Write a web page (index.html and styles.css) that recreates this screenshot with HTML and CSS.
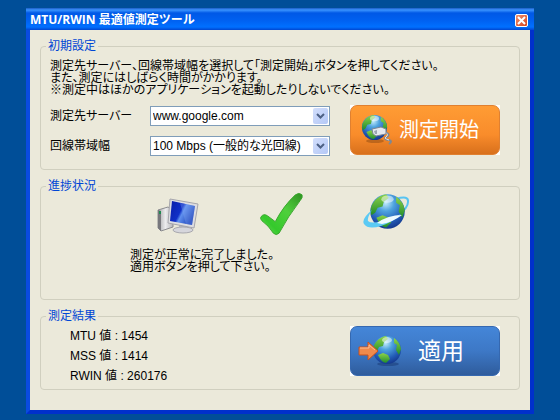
FILE: index.html
```html
<!DOCTYPE html>
<html lang="ja">
<head>
  <meta charset="UTF-8" />
  <meta name="viewport" content="width=device-width, initial-scale=1.0"/>
  <title>MTU/RWIN 最適値測定ツール</title>
  <link rel="stylesheet" href="styles.css">
</head>
<body>
  <svg class="defs" width="0" height="0">
    <defs>
      <radialGradient id="sea" cx="0.45" cy="0.25" r="0.8">
        <stop offset="0" stop-color="#c4ecfb"/>
        <stop offset="0.3" stop-color="#4ea3df"/>
        <stop offset="0.7" stop-color="#2159b4"/>
        <stop offset="1" stop-color="#123184"/>
      </radialGradient>
      <linearGradient id="land" x1="0" y1="0" x2="0" y2="1">
        <stop offset="0" stop-color="#8ed448"/>
        <stop offset="1" stop-color="#1f8a2c"/>
      </linearGradient>
      <linearGradient id="screen" x1="0" y1="0" x2="1" y2="0.5">
        <stop offset="0" stop-color="#0a1ea8"/>
        <stop offset="0.5" stop-color="#1030c8"/>
        <stop offset="0.6" stop-color="#5f90ee"/>
        <stop offset="1" stop-color="#1a3fb8"/>
      </linearGradient>
      <linearGradient id="metal" x1="0" y1="0" x2="1" y2="0">
        <stop offset="0" stop-color="#a8a8aa"/>
        <stop offset="0.5" stop-color="#ececee"/>
        <stop offset="1" stop-color="#b4b4b8"/>
      </linearGradient>
      <linearGradient id="tick" x1="1" y1="0" x2="0" y2="1">
        <stop offset="0" stop-color="#2f8f22"/>
        <stop offset="0.4" stop-color="#4fd03c"/>
        <stop offset="0.75" stop-color="#35c92c"/>
        <stop offset="1" stop-color="#6fe05a"/>
      </linearGradient>
      <symbol id="globe" viewBox="0 0 30 30">
        <circle cx="15" cy="15" r="14" fill="url(#sea)"/>
        <path d="M4 7 Q8 2 14 1 L16 4 L12 7 L11 11 L7 12 L5 16 L2 18 Q0 12 4 7Z" fill="url(#land)"/>
        <path d="M22 3 Q28 7 29 14 L27 20 L24 15 L25 10 L22 8Z" fill="url(#land)"/>
        <path d="M6 20 L11 18 L16 20 L18 24 L14 28 Q9 27 6 20Z" fill="url(#land)"/>
        <ellipse cx="15" cy="5" rx="5" ry="3" fill="#fff" opacity="0.5"/>
      </symbol>
    </defs>
  </svg>

  <div class="window">
    <div class="titlebar">
      <h1>MTU/RWIN 最適値測定ツール</h1>
      <button type="button" class="close" aria-label="閉じる">
        <svg width="9" height="9" viewBox="0 0 9 9"><path d="M1 1 L8 8 M8 1 L1 8" stroke="#fff" stroke-width="2"/></svg>
      </button>
    </div>

    <form class="content">
      <fieldset class="settings">
        <legend>初期設定</legend>
        <div class="inner">
          <p class="note">測定先サーバー、回線帯域幅を選択して「測定開始」ボタンを押してください。<br>
            また、測定にはしばらく時間がかかります。<br>
            ※測定中はほかのアプリケーションを起動したりしないでください。</p>
          <div class="row">
            <div class="fields">
              <label for="server">測定先サーバー</label>
              <div class="combo">
                <select id="server"><option>www.google.com</option></select>
                <svg viewBox="0 0 15 16"><path d="M4 6 L7.500 9.500 L11 6" fill="none" stroke="#4d6185" stroke-width="2"/></svg>
              </div>
              <label for="band">回線帯域幅</label>
              <div class="combo">
                <select id="band"><option>100 Mbps (一般的な光回線)</option></select>
                <svg viewBox="0 0 15 16"><path d="M4 6 L7.500 9.500 L11 6" fill="none" stroke="#4d6185" stroke-width="2"/></svg>
              </div>
            </div>
            <button type="button" class="big">
              <span class="face start">
                <svg width="32" height="32" viewBox="0 0 32 32">
                  <ellipse cx="14" cy="27" rx="9" ry="2" fill="#8d4a12" opacity="0.5"/>
                  <use href="#globe" x="0" y="0" width="27" height="27"/>
                  <path d="M22 18 Q29 19 27 22 L24 24 Q24 26 28 26 Q32 27 28 30" fill="none" stroke="#7d8894" stroke-width="2"/>
                  <path d="M22 18 Q28 19 26 22 L24 24 Q25 25 28 26" fill="none" stroke="#dfe5ea"/>
                  <path d="M11 15 L20 13 L25 15 L25 20 L15 22 L12 20Z" fill="#e4e8ee" stroke="#7b8592"/>
                  <path d="M13 17 L16 16 L16 20 L14 20Z" fill="#9aa5b2"/>
                </svg>
                測定開始
              </span>
            </button>
          </div>
        </div>
      </fieldset>

      <fieldset class="progress">
        <legend>進捗状況</legend>
        <div class="steps">
          <svg width="42" height="40" viewBox="0 -4 42 40">
            <path d="M1 12 L11 9 L16 12 L16 29 L4 33 L1 30Z" fill="url(#metal)" stroke="#8c8c90"/>
            <path d="M1 12 L4 13 L4 33 L1 30Z" fill="#77777c"/>
            <path d="M2 13 H4 V16 H2Z" fill="#1f8a50"/>
            <path d="M22 26 L31 27 L31 31 L22 31Z" fill="#bcbcc2"/>
            <ellipse cx="26" cy="32" rx="10" ry="3" fill="#d6d6dc" stroke="#a8a8ae"/>
            <path d="M13 1 L41 6 L37 30 L11 25Z" fill="#dddde1" stroke="#a6a6ac"/>
            <path d="M15 3 L38 8 L35 27 L13 23Z" fill="url(#screen)"/>
            <path d="M23 5 L38 8 L35 27 L29 26Z" fill="#8bb1f6" opacity="0.3"/>
          </svg>
          <svg width="44" height="44" viewBox="0 0 46 46">
            <path d="M2 26 Q5 22 9 25 L17 31 Q26 14 38 3 Q42 0 45 3 Q46 6 43 9 Q30 26 21 43 Q18 46 15 43 Q10 35 3 30 Q1 28 2 26Z" fill="url(#tick)" stroke="#37a52b"/>
          </svg>
          <svg width="48" height="40" viewBox="0 0 48 40">
            <path d="M33 5 Q46 1 45 8 Q45 14 35 21" fill="none" stroke="#58c4f2" stroke-width="2"/>
            <use href="#globe" x="6" y="-1" width="37" height="37"/>
            <path d="M9 16 Q-2 25 1 30 Q5 36 18 32 Q30 28 38 20 Q29 24 19 27 Q8 30 5 27 Q4 24 9 16Z" fill="#5bcaf4"/>
            <path d="M14 29 Q25 21 39 21 Q30 28 19 30Z" fill="#eefaff"/>
          </svg>
        </div>
        <p class="message">測定が正常に完了しました。<br>適用ボタンを押して下さい。</p>
      </fieldset>

      <fieldset class="result">
        <legend>測定結果</legend>
        <div class="inner row">
          <div class="values">
            <p>MTU 値 : 1454</p>
            <p>MSS 値 : 1414</p>
            <p>RWIN 値 : 260176</p>
          </div>
          <button type="button" class="big">
            <span class="face apply">
              <svg width="44" height="32" viewBox="0 0 44 32">
                <ellipse cx="30" cy="29" rx="11" ry="2" fill="#1d3f7c" opacity="0.6"/>
                <use href="#globe" x="14" y="0" width="30" height="30"/>
                <path d="M1 12 H10 V7 L20 16 L10 25 V20 H1Z" fill="#f08a4c" stroke="#c9511c"/>
                <path d="M2 13 H11 V10 L17 15" fill="none" stroke="#fbbd92"/>
              </svg>
              適用
            </span>
          </button>
        </div>
      </fieldset>
    </form>
  </div>
</body>
</html>
```

FILE: styles.css
```css
* {
  margin: 0;
  padding: 0;
  box-sizing: border-box;
}

body {
  background: #004e98;
  padding: 8px 26px 6px;
  font-family: "Liberation Sans", "Noto Sans CJK JP", sans-serif;
  font-size: 12px;
  line-height: 12px;
  font-feature-settings: "palt";
  color: #000;
}

svg {
  display: block;
  flex: none;
}

.defs {
  position: absolute;
}

.window {
  background: #ebe9da;
  border: 4px solid #0a4be0;
  border-top: none;
  border-right-color: #0030cc;
  border-bottom-color: #0030cc;
}

.titlebar {
  display: flex;
  justify-content: space-between;
  align-items: center;
  height: 22px;
  margin: 0 -4px;
  padding: 2px 6px 0 4px;
  background: linear-gradient(#1c5cc4 0, #3a94ff 2px, #0058e6 5px, #0060f0 12px, #0070ff 19px, #0046d0 22px);
}

.titlebar h1 {
  font-family: "Open Sans", "Noto Sans CJK JP", sans-serif;
  font-size: 12px;
  font-feature-settings: normal;
  color: #fff;
}

.close {
  display: flex;
  align-items: center;
  justify-content: center;
  width: 13px;
  height: 13px;
  border: 1px solid #fff;
  border-radius: 2px;
  background: linear-gradient(135deg, #ee9070, #d8431c);
}

.content {
  display: flex;
  flex-direction: column;
  gap: 10px;
  padding: 10px 10px 20px;
}

fieldset {
  min-width: 0;
  border: 1px solid #d0cfbf;
  border-radius: 4px;
}

legend {
  margin-left: 5px;
  padding: 0 2px;
  color: #0046d5;
}

.row {
  display: flex;
  justify-content: space-between;
  gap: 20px;
}

.settings {
  height: 130px;
}

.settings .inner {
  padding: 8px 19px 0 9px;
}

.note {
  margin-bottom: 9px;
  white-space: nowrap;
}

.fields {
  flex: 1;
  display: grid;
  grid-template-columns: 100px 1fr;
  row-gap: 10px;
  align-items: center;
  align-content: start;
  padding-top: 1px;
}

.combo {
  position: relative;
}

.combo select {
  display: block;
  appearance: none;
  width: 100%;
  height: 20px;
  padding: 0 16px 0 2px;
  border: 1px solid #7f9db9;
  background: #fff;
  font: inherit;
  line-height: 18px;
  font-feature-settings: inherit;
  color: #000;
}

.combo svg {
  position: absolute;
  top: 2px;
  right: 2px;
  width: 15px;
  height: 16px;
  border-radius: 2px;
  background: linear-gradient(135deg, #d2defc, #b4c8f6);
  pointer-events: none;
}

.big {
  width: 150px;
  height: 50px;
  border: none;
  background: #fff;
  font: inherit;
  cursor: pointer;
}

.face {
  display: flex;
  align-items: center;
  height: 50px;
  border-radius: 7px;
  color: #fff;
  line-height: 24px;
}

.start {
  gap: 6px;
  padding-left: 10px;
  border: 1px solid #e08030;
  background: linear-gradient(#ff9c34, #f98c2b 60%, #d8701c);
  font-size: 20px;
}

.apply {
  gap: 16px;
  padding-left: 7px;
  border: 1px solid #3568b0;
  background: linear-gradient(#4486d8, #3d78c6 50%, #2f5c9c);
  font-size: 23px;
}

.progress {
  height: 120px;
}

.steps {
  display: flex;
  align-items: center;
  gap: 60px;
  padding-left: 116px;
}

.message {
  margin-top: 13px;
  padding-left: 89px;
}

.result {
  height: 80px;
}

.result .inner {
  padding: 4px 19px 0 29px;
}

.values {
  line-height: 20px;
}
```
